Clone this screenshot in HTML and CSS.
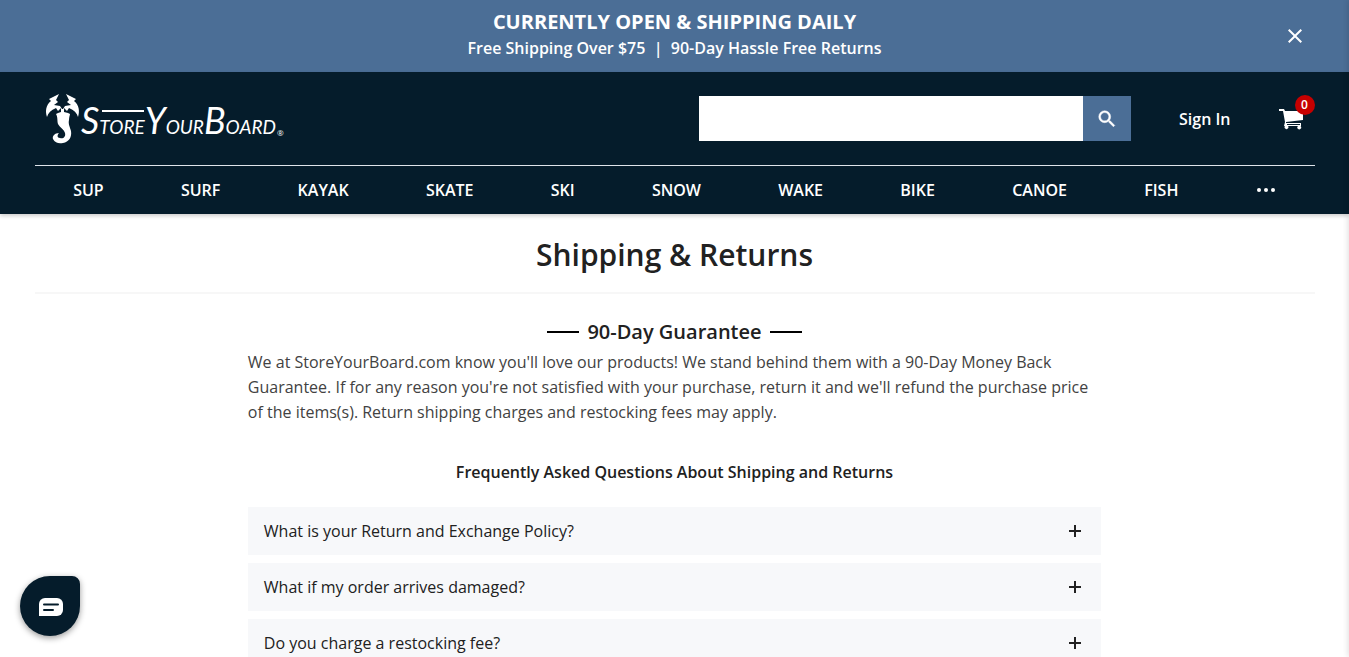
FILE: index.html
```html
<!DOCTYPE html>
<html lang="en">
<head>
    <meta charset="UTF-8">
    <meta name="viewport" content="width=device-width, initial-scale=1.0">
    <title>Shipping &amp; Returns | StoreYourBoard</title>
    <link rel="stylesheet" href="styles.css">
</head>
<body>
    <div class="promo">
        <div class="promo-text">
            <p class="promo-title">CURRENTLY OPEN &amp; SHIPPING DAILY</p>
            <p class="promo-sub">Free Shipping Over $75 &nbsp;|&nbsp; 90-Day Hassle Free Returns</p>
        </div>
        <button class="promo-close" type="button" aria-label="Close">
            <svg width="24" height="24" viewBox="0 0 24 24"><path d="M19 6.41 17.59 5 12 10.59 6.41 5 5 6.41 10.59 12 5 17.59 6.41 19 12 13.41 17.59 19 19 17.59 13.41 12z"/></svg>
        </button>
    </div>

    <header class="header">
        <div class="container">
            <div class="header-top">
                <a class="logo" href="#" aria-label="StoreYourBoard">
                    <svg width="240" height="52" viewBox="0 0 240 52">
                        <!-- scorpion mark -->
                        <path d="M14 1L4 6L6 8C1 12 0 18 2 24C3 20 6 17 11 15L13 18L16 15L16 19L13 20L11 21C13 24 12 28 13 31C15 35 19 36 20 40C21 44 18 46 15 45C12 45 12 42 14 40C10 40 7 43 8 46C10 50 14 51 18 50C24 49 27 44 26 38C25 34 23 31 24 27C24 24 25 22 25 21L23 20L19 19L19 15L22 18L24 15C29 17 32 20 33 24C35 18 34 12 29 8L31 6L21 1L24 7L22 9L26 12L20 13L18 16L17 16L15 13L9 12L13 9L11 7Z"/>
                        <text class="logo-text" x="36" y="41"><tspan class="logo-cap">S</tspan>T<tspan>ORE</tspan><tspan class="logo-cap">Y</tspan>OUR<tspan class="logo-cap">B</tspan>OARD</text>
                        <path d="M57 17h42v2H57z"/>
                        <text class="logo-reg" x="232" y="43">®</text>
                    </svg>
                </a>
                <form class="search">
                    <input class="search-input" type="text" aria-label="Search">
                    <button class="search-button" type="submit" aria-label="Search">
                        <svg width="22" height="22" viewBox="0 0 24 24"><path d="M15.5 14h-.79l-.28-.27A6.47 6.47 0 0 0 16 9.5 6.5 6.5 0 1 0 9.5 16c1.61 0 3.09-.59 4.23-1.57l.27.28v.79l5 4.99L20.49 19zm-6 0a4.5 4.5 0 1 1 0-9 4.5 4.5 0 0 1 0 9z"/></svg>
                    </button>
                </form>
                <a class="sign-in" href="#">Sign In</a>
                <a class="cart" href="#" aria-label="Cart">
                    <svg width="24" height="22" viewBox="0 0 24 22"><path d="M0 1h5l1 2h18v9L7 14v1h15v3h-.5a1.900 1.900 0 1 1-2.500 0H9a1.900 1.900 0 1 1-3 0H5l1-4L4 3H0z"/><path class="cart-gap" d="M8 16.500h13"/></svg>
                    <span class="cart-count">0</span>
                </a>
            </div>
            <nav class="nav">
                <a href="#">SUP</a>
                <a href="#">SURF</a>
                <a href="#">KAYAK</a>
                <a href="#">SKATE</a>
                <a href="#">SKI</a>
                <a href="#">SNOW</a>
                <a href="#">WAKE</a>
                <a href="#">BIKE</a>
                <a href="#">CANOE</a>
                <a href="#">FISH</a>
                <a class="nav-more" href="#" aria-label="More">
                    <svg width="20" height="6" viewBox="0 0 20 6"><circle cx="3" cy="3" r="2"/><circle cx="10" cy="3" r="2"/><circle cx="17" cy="3" r="2"/></svg>
                </a>
            </nav>
        </div>
    </header>

    <main class="container">
        <h1 class="page-title">Shipping &amp; Returns</h1>
        <div class="content">
            <h2 class="guarantee-title">90-Day Guarantee</h2>
            <p class="guarantee-text">We at StoreYourBoard.com know you'll love our products! We stand behind them with a 90-Day Money Back Guarantee. If for any reason you're not satisfied with your purchase, return it and we'll refund the purchase price of the items(s). Return shipping charges and restocking fees may apply.</p>
            <h3 class="faq-title">Frequently Asked Questions About Shipping and Returns</h3>
            <div class="faq">
                <button class="faq-item" type="button">
                    <span>What is your Return and Exchange Policy?</span>
                    <svg width="20" height="20" viewBox="0 0 20 20"><path d="M4 10h12M10 4v12"/></svg>
                </button>
                <button class="faq-item" type="button">
                    <span>What if my order arrives damaged?</span>
                    <svg width="20" height="20" viewBox="0 0 20 20"><path d="M4 10h12M10 4v12"/></svg>
                </button>
                <button class="faq-item" type="button">
                    <span>Do you charge a restocking fee?</span>
                    <svg width="20" height="20" viewBox="0 0 20 20"><path d="M4 10h12M10 4v12"/></svg>
                </button>
            </div>
        </div>
    </main>

    <button class="chat" type="button" aria-label="Chat">
        <svg width="24" height="18" viewBox="0 0 24 18"><path fill="#fff" d="M6 0h12a6 6 0 0 1 6 6v6a6 6 0 0 1-6 6H0V6a6 6 0 0 1 6-6z"/><path stroke="#051c2b" stroke-width="2" stroke-linecap="round" d="M5 6.500h14M5 12h9"/></svg>
    </button>
    <div class="drawer-edge"></div>
</body>
</html>
```
FILE: styles.css
```css
* {
    box-sizing: border-box;
}
body {
    margin: 0;
    font-family: "Open Sans", sans-serif;
    font-size: 16px;
    color: #212121;
    background-color: #fff;
}
h1, h2, h3, p {
    margin: 0;
}
a {
    color: inherit;
    text-decoration: none;
}
button {
    padding: 0;
    border: none;
    font: inherit;
    color: inherit;
    cursor: pointer;
}
svg {
    display: block;
}
.container {
    width: 95%;
    max-width: 1280px;
    margin: 0 auto;
}
.promo {
    display: flex;
    align-items: center;
    height: 72px;
    padding: 0 42px 0 66px;
    background-color: #4b6e96;
    color: #fff;
}
.promo-text {
    flex: 1;
    padding-bottom: 4px;
    text-align: center;
}
.promo-title {
    font-size: 20px;
    line-height: 28px;
    font-weight: 700;
}
.promo-sub {
    line-height: 24px;
    font-weight: 600;
}
.promo-close {
    background: none;
}
.promo-close svg {
    fill: #fff;
}
.header {
    position: relative;
    background-color: #051c2b;
    color: #fff;
    font-weight: 600;
    box-shadow: 0 2px 4px rgba(0, 0, 0, 0.2);
}
.header-top {
    display: flex;
    align-items: center;
    height: 94px;
    border-bottom: 1px solid #dfe4ea;
}
.logo {
    margin-left: 10px;
    margin-right: auto;
}
.logo svg {
    fill: #fff;
    overflow: visible;
}
.logo-text {
    font-family: Lato, sans-serif;
    font-style: italic;
    font-weight: 400;
    font-size: 19px;
}
.logo-cap {
    font-size: 36px;
}
.logo-reg {
    font-size: 8px;
    font-weight: 400;
}
.search {
    display: flex;
    width: 432px;
    height: 45px;
}
.search-input {
    flex: 1;
    min-width: 0;
    padding: 0 12px;
    border: none;
    border-radius: 0;
    background-color: #fff;
    font: inherit;
    outline: none;
}
.search-button {
    display: flex;
    align-items: center;
    justify-content: center;
    width: 48px;
    background-color: #4b6e96;
}
.search-button svg {
    fill: #fff;
    stroke: #fff;
    stroke-width: 0.5;
}
.sign-in {
    margin: 0 48px;
}
.cart {
    position: relative;
    padding-right: 12px;
}
.cart svg {
    fill: #fff;
}
.cart-gap {
    stroke: #051c2b;
    stroke-width: 1;
}
.cart-count {
    position: absolute;
    top: -13px;
    right: 0;
    width: 20px;
    height: 20px;
    border-radius: 50%;
    background-color: #c60000;
    font-size: 12px;
    line-height: 20px;
    text-align: center;
}
.nav {
    display: flex;
    align-items: center;
    justify-content: space-around;
    height: 48px;
}
.nav-more svg {
    fill: #fff;
}
.page-title {
    padding: 18px 0 14px;
    border-bottom: 2px solid #f7f7f7;
    font-size: 30px;
    line-height: 46px;
    font-weight: 600;
    text-align: center;
}
.content {
    width: 66.6667%;
    margin: 0 auto;
    padding-top: 22px;
}
.guarantee-title {
    display: flex;
    align-items: center;
    justify-content: center;
    gap: 8px;
    font-size: 20px;
    line-height: 32px;
    font-weight: 600;
}
.guarantee-title::before,
.guarantee-title::after {
    content: "";
    width: 32px;
    height: 2px;
    background-color: #000;
}
.guarantee-text {
    padding: 2px 0 19px;
    line-height: 25px;
    color: #424242;
}
.faq-title {
    padding: 16px 0;
    font-size: 16px;
    line-height: 24px;
    font-weight: 600;
    text-align: center;
}
.faq {
    display: flex;
    flex-direction: column;
    gap: 8px;
    padding-top: 7px;
}
.faq-item {
    display: flex;
    align-items: center;
    justify-content: space-between;
    height: 48px;
    padding: 0 16px;
    background-color: #f7f8fa;
}
.faq-item svg {
    stroke: #212121;
    stroke-width: 2;
}
.chat {
    position: fixed;
    left: 20px;
    bottom: 21px;
    display: flex;
    align-items: center;
    justify-content: center;
    width: 60px;
    height: 60px;
    padding: 2px 0 0 2px;
    border-radius: 50% 8px 50% 50%;
    background-color: #051c2b;
    box-shadow: 0 2px 6px rgba(0, 0, 0, 0.4);
}
/* shadow of the closed drawer on the right */
.drawer-edge {
    position: fixed;
    top: 0;
    bottom: 0;
    right: -4px;
    width: 4px;
    box-shadow: 0 0 6px rgba(0, 0, 0, 0.2);
}
```
